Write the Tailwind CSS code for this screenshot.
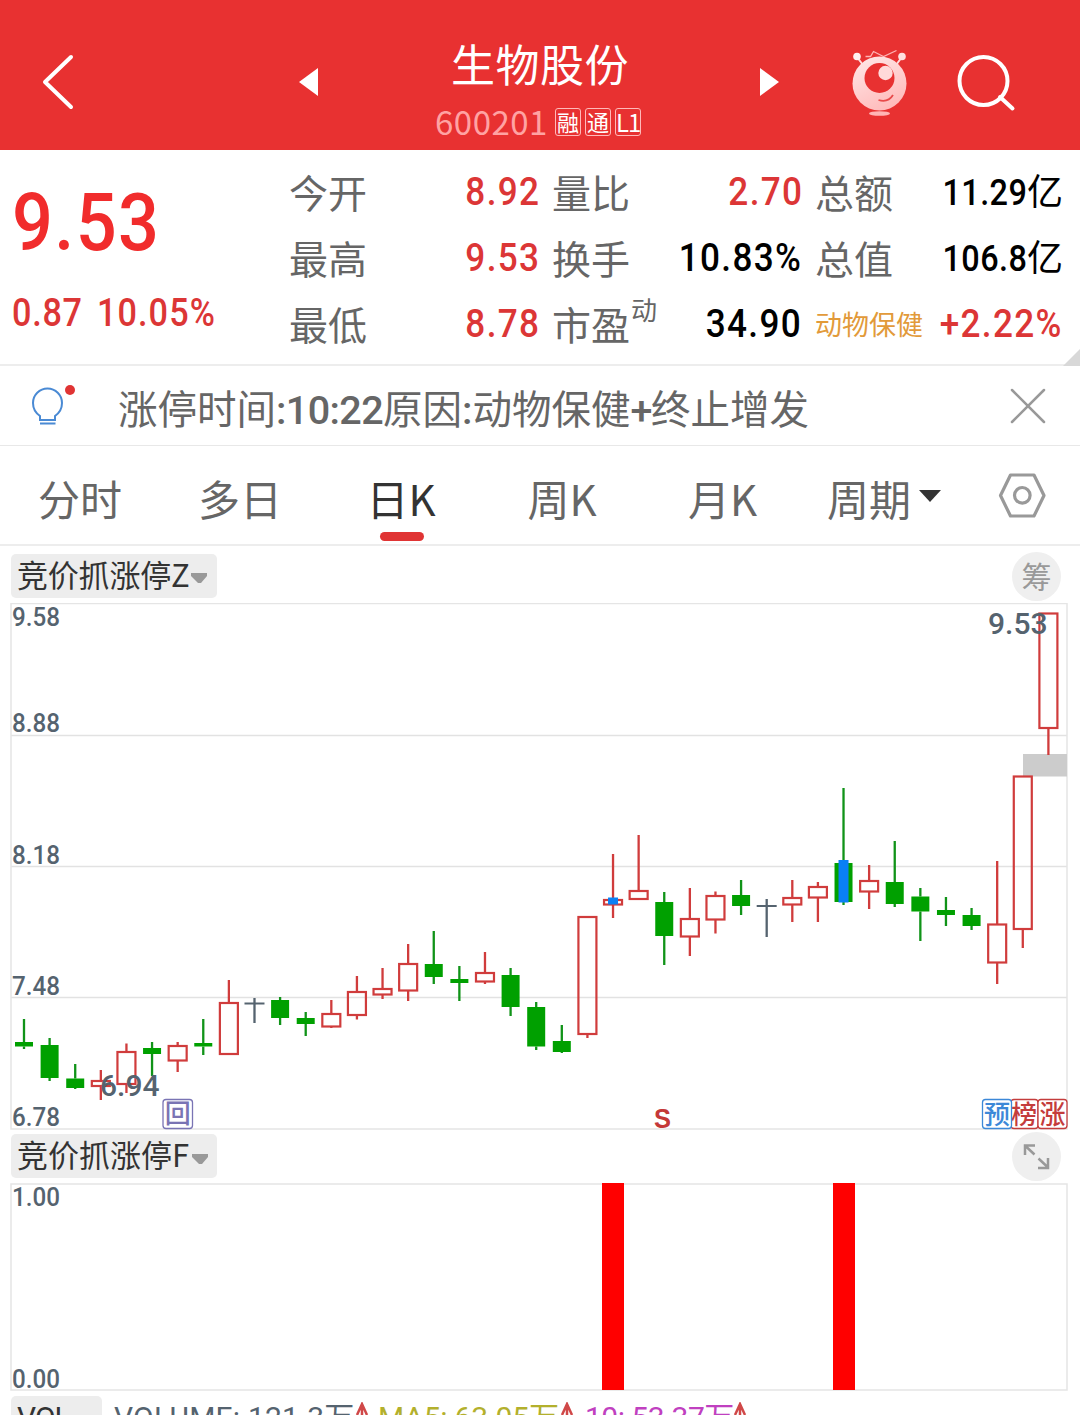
<!DOCTYPE html>
<html lang="zh-CN">
  <head>
    <meta charset="UTF-8" />
    <meta name="viewport" content="width=device-width, initial-scale=1.0" />
    <title>生物股份 600201</title>
    <script src="https://cdn.jsdelivr.net/npm/@tailwindcss/browser@4"></script>
  </head>
  <body class="w-[1080px] h-[1415px] overflow-hidden bg-white text-[#666] font-['Roboto','Noto_Sans_CJK_SC',sans-serif]">

    <!-- title bar -->
    <header class="h-[150px] bg-[#e83131] flex text-white">
      <div class="w-[280px] pt-[52px] pl-10">
        <svg width="36" height="60" viewBox="0 0 36 60" fill="none" stroke="#fff" stroke-width="4" stroke-linecap="round" stroke-linejoin="round"><path d="M31 5L5 30L31 55" /></svg>
      </div>
      <div class="w-[60px] pt-[67px] pl-[19px]">
        <svg width="20" height="30" viewBox="0 0 20 30" fill="#fff"><path d="M0 15L19 1V29Z" /></svg>
      </div>
      <div class="w-[400px] pt-[32px] flex flex-col items-center">
        <h1 class="text-[44px] leading-[62px] tracking-[.5px] font-['Noto_Sans_CJK_SC',sans-serif]">生物股份</h1>
        <div class="flex items-center h-[30px] mt-[13px] mr-1 gap-[4px] font-['Noto_Sans_CJK_SC',sans-serif]">
          <span class="text-[33px] leading-[30px] text-[#ffa3a3] tracking-[.5px] mr-[3px] -mt-[2px]">600201</span>
          <span class="w-[26px] h-7 border border-[#ffb9b9] rounded-[3px] text-[22px] leading-[25px] text-center">融</span>
          <span class="w-[26px] h-7 border border-[#ffb9b9] rounded-[3px] text-[22px] leading-[25px] text-center">通</span>
          <span class="w-[26px] h-7 border border-[#ffb9b9] rounded-[3px] text-[24px] leading-[25px] text-center tracking-[-1px]">L1</span>
        </div>
      </div>
      <div class="w-[110px] pt-[67px] pl-[19px]">
        <svg width="20" height="30" viewBox="0 0 20 30" fill="#fff"><path d="M20 15L1 1V29Z" /></svg>
      </div>
      <div class="w-[104px] pt-[46px]">
        <svg width="60" height="72" viewBox="0 0 60 72">
          <defs><linearGradient id="ball" x1="0.2" y1="0" x2="0.7" y2="1"><stop offset="0" stop-color="#ffe6e6" /><stop offset="1" stop-color="#ffb9b9" /></linearGradient></defs>
          <path d="M15.500 10.500h5l3-5l10 5l13-6" fill="none" stroke="#ffb3b3" stroke-width="1.300" />
          <path d="M7 11l6 8M52 11l-6 8" stroke="#ffdcdc" stroke-width="2" />
          <circle cx="7" cy="10.500" r="3.800" fill="#fff0f0" />
          <circle cx="52" cy="10.500" r="3.800" fill="#ffe0e0" />
          <circle cx="29.500" cy="37.500" r="27" fill="url(#ball)" />
          <circle cx="29.500" cy="32" r="15" fill="#e83131" />
          <circle cx="35.500" cy="27" r="7.200" fill="#ffdada" />
          <path d="M28.500 54Q38 57 43 49" fill="none" stroke="#e84a4a" stroke-width="1.800" />
          <ellipse cx="29.500" cy="67.500" rx="10.500" ry="2.300" fill="#ffb5b5" />
        </svg>
      </div>
      <div class="pt-[52px]">
        <svg width="62" height="60" viewBox="0 0 62 60" fill="none" stroke="#fff" stroke-width="4" stroke-linecap="round"><circle cx="29.500" cy="29" r="24" /><path d="M46 45L58.500 56.500" /></svg>
      </div>
    </header>

    <!-- quote -->
    <section class="relative h-[216px] border-b-2 border-[#ededed] flex">
      <div class="w-[289px] pl-3 text-[#f12c2c]">
        <div class="text-[80px] leading-[80px] mt-[33px] origin-left scale-x-90 tracking-[1.500px] font-medium">9.53</div>
        <div class="mt-[30px] h-10 flex gap-[15px] text-[38px] leading-[40px] font-medium text-[#dc3636]"><span class="w-[70px] origin-left scale-x-90 tracking-[.8px]">0.87</span><span class="origin-left scale-x-90 tracking-[1.200px]">10.05%</span></div>
      </div>
      <div class="w-[250px] mt-[9px] text-[39px] leading-[66px]">
        <div class="flex justify-between h-[66px]"><span class="mt-[3px]">今开</span><span class="origin-right scale-x-90 tracking-[1.500px] -mr-px font-medium text-[#dc3636]">8.92</span></div>
        <div class="flex justify-between h-[66px]"><span class="mt-[3px]">最高</span><span class="origin-right scale-x-90 tracking-[1.500px] -mr-px font-medium text-[#dc3636]">9.53</span></div>
        <div class="flex justify-between h-[66px]"><span class="mt-[3px]">最低</span><span class="origin-right scale-x-90 tracking-[1.500px] -mr-px font-medium text-[#dc3636]">8.78</span></div>
      </div>
      <div class="w-[249px] ml-[13px] mt-[9px] text-[39px] leading-[66px]">
        <div class="flex justify-between h-[66px]"><span class="mt-[3px]">量比</span><span class="origin-right scale-x-90 tracking-[1.500px] -mr-[2px] font-medium text-[#dc3636]">2.70</span></div>
        <div class="flex justify-between h-[66px]"><span class="mt-[3px]">换手</span><span class="origin-right scale-x-90 tracking-[1.500px] -mr-px font-medium text-black">10.83%</span></div>
        <div class="flex justify-between h-[66px]"><span class="mt-[3px] flex">市盈<span class="text-[26px] leading-[34px] ml-px">动</span></span><span class="origin-right scale-x-90 tracking-[1.500px] -mr-px font-medium text-black">34.90</span></div>
      </div>
      <div class="w-[248px] ml-[14px] mt-[9px] text-[39px] leading-[66px]">
        <div class="flex justify-between h-[66px]"><span class="mt-[3px]">总额</span><span class="mt-px flex text-[36px] text-black"><span class="origin-right scale-x-90 tracking-[.5px] font-medium">11.29</span>亿</span></div>
        <div class="flex justify-between h-[66px]"><span class="mt-[3px]">总值</span><span class="mt-px flex text-[36px] text-black"><span class="origin-right scale-x-90 tracking-[.5px] font-medium">106.8</span>亿</span></div>
        <div class="flex justify-between h-[66px]"><span class="mt-[2px] text-[27px] text-[#e29a3a]">动物保健</span><span class="-ml-6 origin-right scale-x-90 tracking-[1.500px] font-medium text-[#dc3636]">+2.22%</span></div>
      </div>
      <svg class="absolute right-0 -bottom-[2px]" width="17" height="17" viewBox="0 0 17 17" fill="#d8d8d8"><path d="M17 0V17H0Z" /></svg>
    </section>

    <!-- limit-up reason -->
    <section class="h-[80px] border-b border-[#e8e8e8] flex items-center">
      <svg class="ml-[28px]" width="50" height="48" viewBox="0 0 50 48" fill="none" stroke="#4a8ad4" stroke-width="2">
        <path d="M12 38V34C7 30.500 5 26 5 21a14.500 14.500 0 0 1 29 0c0 5-2 9.500-7 13v4ZM12 41.500h15.500" />
        <circle cx="42" cy="8" r="5" fill="#e03434" stroke="none" />
      </svg>
      <p class="ml-10 w-[890px] text-[39.500px] leading-[74px] mt-[11px] whitespace-nowrap">涨停时间<span class="font-medium tracking-[-.6px]">:10:22</span>原因<span class="font-medium">:</span>动物保健<span class="font-medium tracking-[-1.500px]">+</span>终止增发</p>
      <svg width="40" height="40" viewBox="0 0 40 40" stroke="#999" stroke-width="2.500" stroke-linecap="round"><path d="M4 4L36 36M36 4L4 36" /></svg>
    </section>

    <!-- period tabs -->
    <nav class="h-[100px] border-b-2 border-[#ededed] flex text-[42px] leading-[104px] font-['Noto_Sans_CJK_SC',sans-serif]">
      <span class="w-[160px] text-center">分时</span>
      <span class="w-[160px] text-center">多日</span>
      <span class="relative w-[162px] text-center text-[#333]">日K<i class="absolute left-[60px] top-[86px] w-[44px] h-[9px] rounded-full bg-[#e03434]"></i></span>
      <span class="w-[160px] text-center">周K</span>
      <span class="w-[161px] text-center">月K</span>
      <span class="w-[195px] h-[104px] pl-6 flex items-center gap-[7px]">周期<svg class="-mt-[5px]" width="24" height="12" viewBox="0 0 24 12" fill="#333"><path d="M1 0H23L12 12Z" /></svg></span>
      <svg class="mt-[26px]" width="48" height="46" viewBox="0 0 48 46" fill="none" stroke="#999" stroke-width="3.200" stroke-linejoin="round"><path d="M12.500 3H36L46 23.500L36 44H12.500L2.500 23.500Z" /><circle cx="24.300" cy="23.300" r="7.800" /></svg>
    </nav>

    <!-- main chart -->
    <div class="h-[57px] pl-[11px] pr-[19px] pt-[6px] flex justify-between">
      <button class="w-[206px] h-[44px] mt-[2px] pl-[6px] rounded-[5px] bg-[#ededed] flex items-center text-[31px] leading-[44px] text-[#333] font-['Noto_Sans_CJK_SC',sans-serif]"><span class="-mt-[5px] tracking-[-.2px]">竞价抓涨停Z</span><svg class="mt-1" width="18" height="12" viewBox="0 0 18 12" fill="#999"><path d="M1 1H17V4L11 11H8L1 4Z" /></svg></button>
      <span class="size-[49px] rounded-full bg-[#efefef] text-[30px] leading-[52px] text-center text-[#999]">筹</span>
    </div>
    <svg class="block" width="1080" height="527" viewBox="0 603 1080 527">
      <path d="M11 735.500H1067M11 866.500H1067M11 997.500H1067" stroke="#e2e2e2" stroke-width="1.300" />
      <rect x="11" y="603.500" width="1056" height="525.500" fill="none" stroke="#e5e5e5" stroke-width="1.500" />
      <rect x="1023" y="754" width="44" height="22.500" fill="#ccc" />
      <g id="candles"></g>
      <g fill="#55636f" font-size="26" font-weight="500">
        <text x="12" y="626" textLength="48" lengthAdjust="spacingAndGlyphs">9.58</text>
        <text x="12" y="732" textLength="48" lengthAdjust="spacingAndGlyphs">8.88</text>
        <text x="12" y="864" textLength="48" lengthAdjust="spacingAndGlyphs">8.18</text>
        <text x="12" y="995" textLength="48" lengthAdjust="spacingAndGlyphs">7.48</text>
        <text x="12" y="1126" textLength="48" lengthAdjust="spacingAndGlyphs">6.78</text>
      </g>
      <g fill="#55636f" font-size="30" font-weight="500">
        <text x="988" y="634">9.53</text>
        <text x="100" y="1095.500">6.94</text>
      </g>
      <!-- event marks -->
      <g font-family="Noto Sans CJK SC" font-size="26" font-weight="500" text-anchor="middle" stroke-width="1.300">
        <rect x="163" y="1099.500" width="29.500" height="29" rx="3" fill="#fff" stroke="#7a74b4" />
        <text x="177.700" y="1123" fill="#7a74b4">回</text>
        <rect x="1011" y="1099.500" width="27" height="29" rx="3" fill="#fff" stroke="#c43c3c" />
        <text x="1024" y="1123.500" fill="#c43c3c">榜</text>
        <rect x="982.500" y="1099.500" width="29" height="29" rx="3" fill="#fff" stroke="#3c88d8" />
        <text x="997" y="1123.500" fill="#3c88d8">预</text>
        <rect x="1038" y="1099.500" width="29" height="29" rx="3" fill="#fff" stroke="#c43c3c" />
        <text x="1052.500" y="1123.500" fill="#c43c3c">涨</text>
      </g>
      <text x="662.500" y="1127.500" fill="#c43838" font-family="Liberation Sans" font-size="28" font-weight="700" text-anchor="middle" textLength="17" lengthAdjust="spacingAndGlyphs">S</text>
    </svg>

    <!-- sub chart -->
    <div class="h-[53px] pl-[11px] pr-[19px] pt-[2px] flex justify-between">
      <button class="w-[206px] h-[44px] mt-[2px] pl-[6px] rounded-[5px] bg-[#ededed] flex items-center text-[31px] leading-[44px] text-[#333] font-['Noto_Sans_CJK_SC',sans-serif]"><span class="-mt-[5px]">竞价抓涨停F</span><svg class="mt-[5px] ml-[2px]" width="18" height="12" viewBox="0 0 18 12" fill="#999"><path d="M1 1H17V4L11 11H8L1 4Z" /></svg></button>
      <svg width="49" height="49" viewBox="0 0 49 49"><circle cx="24.500" cy="24.500" r="24.500" fill="#efefef" /><path d="M13 23V13.500H23M14 14.500L22.500 22.500M26.500 26.500L35 34.500M36 26V36H26" fill="none" stroke="#999" stroke-width="2.500" /></svg>
    </div>
    <svg class="block" width="1080" height="208" viewBox="0 1183 1080 208">
      <rect x="11" y="1184" width="1056" height="206" fill="none" stroke="#e5e5e5" stroke-width="1.500" />
      <path d="M602 1183h22v207h-22zM833 1183h22v207h-22z" fill="#f00" />
      <g fill="#55636f" font-size="26" font-weight="500">
        <text x="12" y="1206" textLength="48" lengthAdjust="spacingAndGlyphs">1.00</text>
        <text x="12" y="1388" textLength="48" lengthAdjust="spacingAndGlyphs">0.00</text>
      </g>
    </svg>

    <!-- volume row, runs off the bottom edge -->
    <div class="h-[24px] pl-[11px] pt-[5px] flex text-[30px] leading-[44px] overflow-hidden whitespace-nowrap">
      <span class="w-[91px] h-[44px] shrink-0 pl-[6px] rounded-[5px] bg-[#ededed] text-[#333] tracking-[-1px]">VOL</span>
      <span class="ml-3 w-[264px] shrink-0 flex text-[#55636f]"><span class="w-[241px] tracking-[.2px]">VOLUME: 121.3万</span><svg class="mt-[6px]" width="14" height="26" viewBox="0 0 14 26" fill="none" stroke="#d04848" stroke-width="2.500"><path d="M7 2V26M2 13L7 2L12 13" /></svg></span>
      <span class="w-[207px] shrink-0 flex text-[#b3b02c]"><span class="w-[182px] tracking-[-.2px]">MA5: 63.05万</span><svg class="mt-[6px]" width="14" height="26" viewBox="0 0 14 26" fill="none" stroke="#d04848" stroke-width="2.500"><path d="M7 2V26M2 13L7 2L12 13" /></svg></span>
      <span class="shrink-0 flex text-[#c040c0]"><span class="w-[148px] tracking-[-.5px]">10: 53.37万</span><svg class="mt-[6px]" width="14" height="26" viewBox="0 0 14 26" fill="none" stroke="#d04848" stroke-width="2.500"><path d="M7 2V26M2 13L7 2L12 13" /></svg></span>
    </div>

    <script>
      // [kind, body top, body bottom, high, low] r = up, g = down, d = flat
      const candles = [
        ['g', 1042, 1046.5, 1019, 1049], ['g', 1045, 1078, 1038, 1081], ['g', 1078.5, 1088, 1064, 1089],
        ['r', 1081, 1086, 1070, 1100], ['r', 1052, 1084, 1043.5, 1093], ['g', 1048, 1054, 1042, 1076],
        ['r', 1046, 1060.5, 1042, 1072], ['g', 1043, 1046.5, 1019, 1055], ['r', 1003, 1054, 980, 1054],
        ['d', 1003.5, 1003.5, 998, 1023], ['g', 1000, 1018, 997, 1025], ['g', 1018, 1024, 1012, 1036],
        ['r', 1014, 1026.5, 1000, 1028], ['r', 992, 1015, 976, 1019.5], ['r', 989, 994.5, 968, 999],
        ['r', 964, 990.5, 944, 1001], ['g', 964, 977, 931, 984], ['g', 979, 983, 966, 1001],
        ['r', 973, 981.5, 952, 984], ['g', 975, 1007, 968, 1016], ['g', 1007, 1046.5, 1002, 1050],
        ['g', 1041, 1052, 1025, 1053], ['r', 917, 1034, 917, 1038], ['r', 900, 904.5, 854, 918],
        ['r', 891, 899, 835, 899], ['g', 902, 936, 892, 965], ['r', 919, 936.5, 888, 956],
        ['r', 896, 919.5, 891.5, 933.5], ['g', 895, 906, 880, 915], ['d', 906, 906, 899, 937],
        ['r', 898, 904.5, 880, 922], ['r', 887, 897.5, 882, 922], ['g', 863, 902, 788, 905],
        ['r', 881, 891.5, 865, 909], ['g', 882, 904, 841, 907], ['g', 896.5, 911.5, 888, 941],
        ['g', 910, 915, 897, 926], ['g', 915, 926, 908, 930], ['r', 924.5, 962.5, 861, 984],
        ['r', 776.5, 929, 776.5, 948], ['r', 613.5, 728, 613.5, 755]
      ]
      // blue signal bars, by candle index
      const signals = { 23: [897.5, 904.5], 32: [860, 902.5] }

      document.querySelector('#candles').innerHTML = candles.map(([kind, top, bottom, high, low], i) => {
        const x = 24 + i * 25.61
        const color = kind === 'r' ? '#d03c3c' : kind === 'g' ? '#109318' : '#55636f'
        const wick = `<path d="M${x} ${high}V${top}M${x} ${bottom}V${low}" stroke="${color}" stroke-width="2.3" />`
        let body = `<path d="M${x - 10} ${top}h20" stroke="${color}" stroke-width="2" />`
        if (kind === 'r') body = `<rect x="${x - 9}" y="${top}" width="18" height="${bottom - top}" fill="none" stroke="${color}" stroke-width="2.2" />`
        if (kind === 'g') body = `<rect x="${x - 9}" y="${top}" width="18" height="${bottom - top}" fill="#00a000" />`
        const s = signals[i]
        const signal = s ? `<rect x="${x - 5}" y="${s[0]}" width="10" height="${s[1] - s[0]}" fill="#0a80f5" />` : ''
        return wick + body + signal
      }).join('')
    </script>
  </body>
</html>
